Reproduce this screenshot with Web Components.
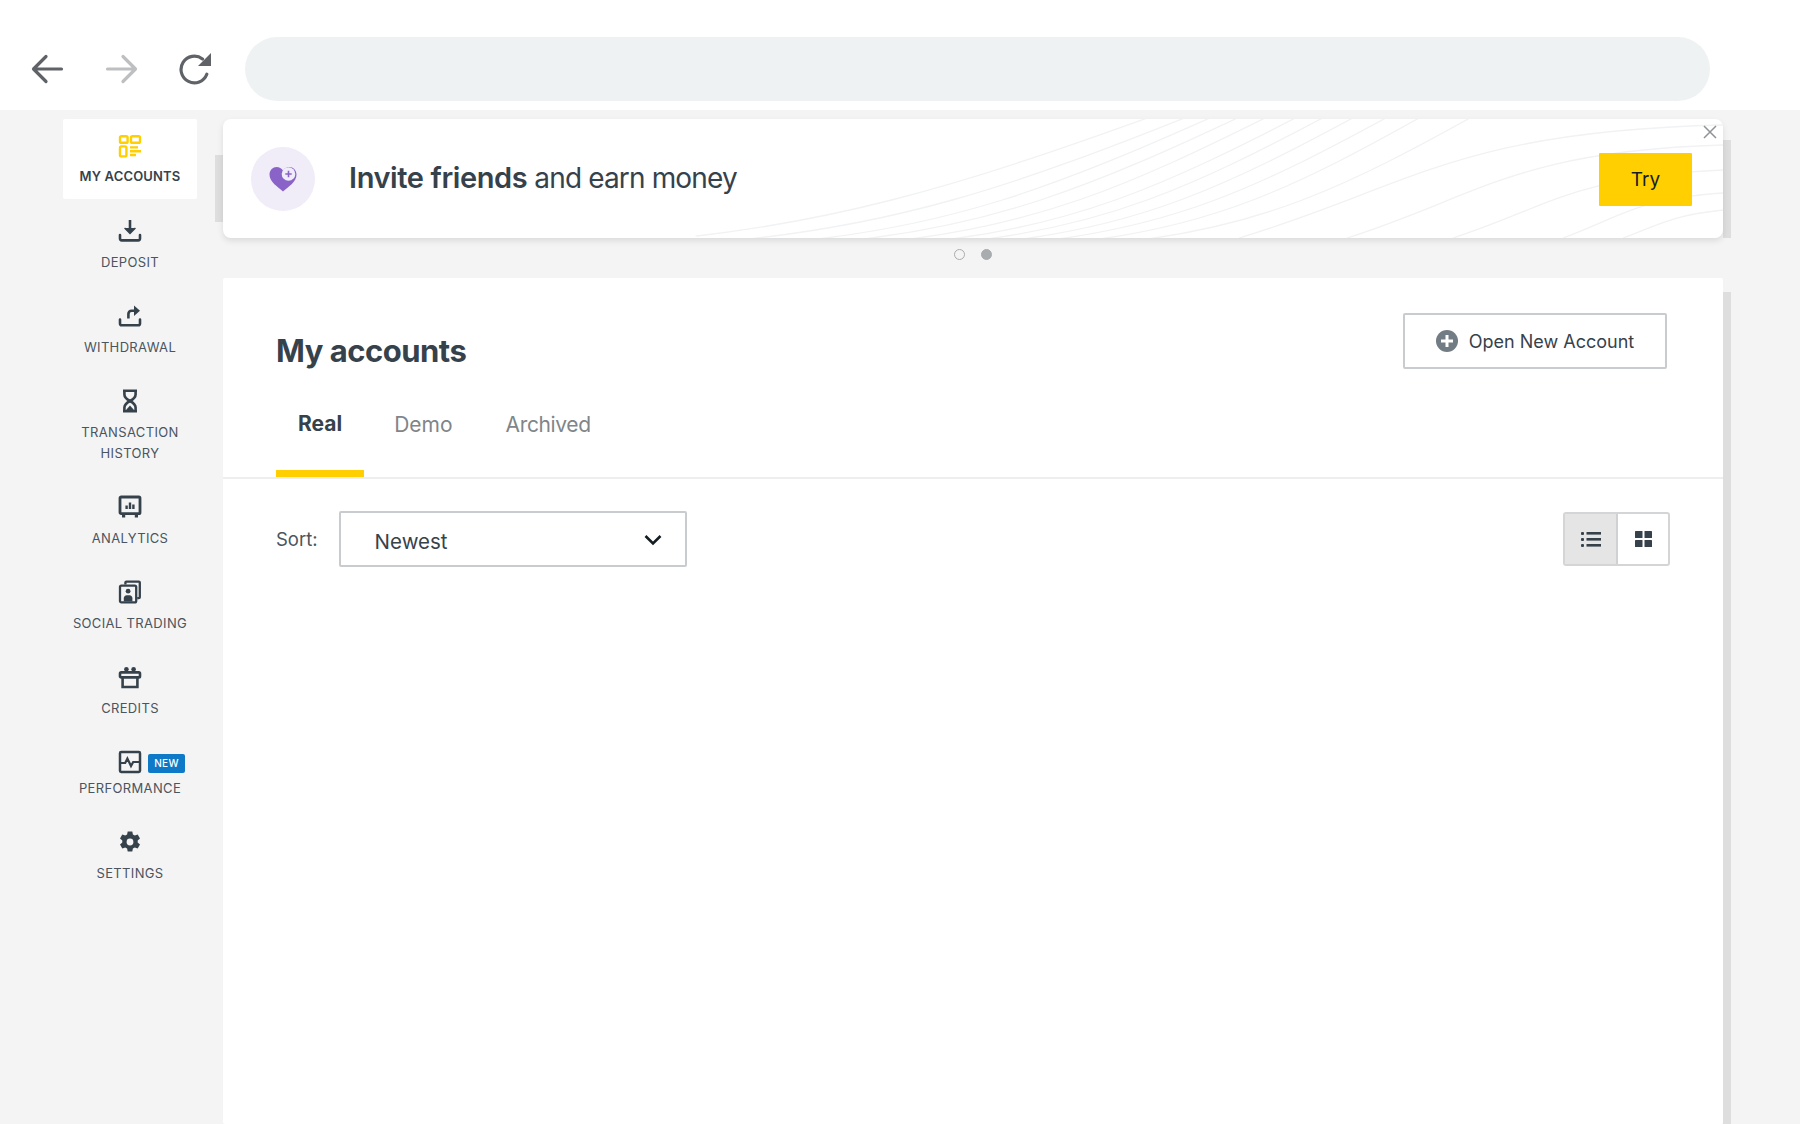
<!DOCTYPE html>
<html>
<head>
<meta charset="utf-8">
<title>My accounts</title>
<style>
  html { background: #f4f4f5; }
  html, body { margin: 0; height: 1124px; overflow: hidden; }
  body { font-family: Inter, "Liberation Sans", sans-serif; color: #36424b; }
  app-shell svg { display: block; }
</style>
</head>
<body>
<app-shell>
  <browser-bar slot="top"></browser-bar>
  <side-nav slot="nav">
    <nav-item label="MY ACCOUNTS" active>
      <svg width="24" height="24" viewBox="0 0 24 24" fill="none" stroke="#ffcf01" stroke-width="2.4"><rect x="2" y="2.2" width="7.6" height="6.6" rx="1.4"/><rect x="13" y="2.2" width="9" height="6.6" rx="1.4"/><rect x="2" y="12.4" width="6.4" height="10" rx="1.4"/><path d="M12 13.400h8M12 17.200h11M12 21h6"/></svg>
    </nav-item>
    <nav-item label="DEPOSIT">
      <svg width="24" height="24" viewBox="0 0 24 24" fill="none" stroke="#36424b" stroke-width="2.6"><path d="M12 1v12"/><path d="M6.600 9l5.400 5.600L17.400 9" fill="#36424b" stroke-width="1.400"/><path d="M2 16v3.600c0 1 .8 1.800 1.800 1.800h16.400c1 0 1.800-.8 1.800-1.800V16" stroke-linecap="round"/></svg>
    </nav-item>
    <nav-item label="WITHDRAWAL">
      <svg width="24" height="24" viewBox="0 0 24 24" fill="none" stroke="#36424b" stroke-width="2.6"><path d="M10.400 14.600V10c0-2 1.200-3.200 3.200-3.200H19"/><path d="M16 1.400l6 5.400-6 5.200z" fill="#36424b" stroke="none"/><path d="M2 15.600v3.800c0 1 .8 1.800 1.800 1.800h16.400c1 0 1.800-.8 1.800-1.800v-3.800" stroke-linecap="round"/></svg>
    </nav-item>
    <nav-item label="TRANSACTION HISTORY">
      <svg width="24" height="24" viewBox="0 0 24 24" fill="none" stroke="#36424b" stroke-width="2.6"><path d="M5 1.800h14M5 22.200h14"/><path d="M6.400 2v3.400c0 2.600 2 4.600 5.600 6.600 3.600-2 5.600-4 5.600-6.600V2"/><path d="M6.400 22v-3.400c0-2.600 2-4.600 5.600-6.600 3.600 2 5.600 4 5.600 6.600V22"/><path d="M8 21l4-4.400 4 4.400z" fill="#36424b" stroke="none"/></svg>
    </nav-item>
    <nav-item label="ANALYTICS">
      <svg width="24" height="24" viewBox="0 0 24 24" fill="none" stroke="#36424b" stroke-width="2.800"><rect x="2" y="2" width="20" height="16.600" rx="1.200"/><path d="M5.600 19v3.600M18.400 19v3.600" stroke-width="3.200"/><path d="M7.400 10.400h2.400v3.600H7.400zM10.800 7.600h2.400V14h-2.400zM14.200 9.400h2.400V14h-2.400z" fill="#36424b" stroke="none"/></svg>
    </nav-item>
    <nav-item label="SOCIAL TRADING">
      <svg width="24" height="24" viewBox="0 0 24 24" fill="none" stroke="#36424b" stroke-width="2.300"><path d="M7.400 4.600V2.600c0-.6.400-1 1-1h12.400c.6 0 1 .4 1 1v14.600c0 .6-.4 1-1 1h-1.600"/><rect x="2" y="5.600" width="16.200" height="16.800" rx="1.400"/><circle cx="10.100" cy="11.200" r="2.400" fill="#36424b" stroke="none"/><path d="M5.800 21.400v-3.200c0-1.600 1.200-3 2.800-3h3c1.600 0 2.800 1.400 2.800 3v3.200z" fill="#36424b" stroke="none"/></svg>
    </nav-item>
    <nav-item label="CREDITS">
      <svg width="24" height="24" viewBox="0 0 24 24" fill="none" stroke="#36424b" stroke-width="2.600"><rect x="2" y="7.400" width="20" height="5" rx="1.200"/><path d="M4.600 12.600V22h14.800v-9.400"/><circle cx="8.400" cy="4.200" r="2.300" fill="#36424b" stroke="none"/><circle cx="15.600" cy="4.200" r="2.300" fill="#36424b" stroke="none"/></svg>
    </nav-item>
    <nav-item label="PERFORMANCE" badge="NEW" compact>
      <svg width="24" height="24" viewBox="0 0 24 24" fill="none" stroke="#36424b" stroke-width="2.500"><rect x="2" y="2" width="20" height="20" rx="1.200"/><path d="M2.600 13h4.600l2.200-4.400 3.600 7.400 2.200-4h6" stroke-width="2.200"/></svg>
    </nav-item>
    <nav-item label="SETTINGS">
      <svg width="24" height="24" viewBox="0 0 24 24"><path fill="#36424b" fill-rule="evenodd" d="M14.300 1.400l.6 3 1.900 1 2.900-1 2.300 4-2.300 2v2.200l2.300 2-2.300 4-2.900-1-1.900 1-.6 3H9.700l-.6-3-1.900-1-2.900 1-2.300-4 2.300-2v-2.200l-2.300-2 2.300-4 2.900 1 1.900-1 .6-3zM12 8.600a3.400 3.400 0 1 0 0 6.800 3.400 3.400 0 0 0 0-6.800z"/></svg>
    </nav-item>
  </side-nav>
  <promo-banner slot="main"><b>Invite friends</b> and earn money</promo-banner>
  <carousel-dots slot="main"></carousel-dots>
  <accounts-panel slot="main"></accounts-panel>
</app-shell>

<script>
  class AppShell extends HTMLElement {
    constructor() {
      super();
      this.attachShadow({ mode: "open" });
      this.shadowRoot.innerHTML = `
        <style>
          :host { display: block; height: 1124px; overflow: hidden; }
          .body { display: flex; align-items: stretch; }
          .nav { width: 223px; flex: none; padding: 9px 0 0 63px; box-sizing: border-box; }
          .main { width: 1500px; flex: none; padding-top: 9px; }
        </style>
        <slot name="top"></slot>
        <div class="body">
          <div class="nav"><slot name="nav"></slot></div>
          <div class="main"><slot name="main"></slot></div>
        </div>`;
    }
  }
  customElements.define("app-shell", AppShell);

  class BrowserBar extends HTMLElement {
    constructor() {
      super();
      this.attachShadow({ mode: "open" });
      this.shadowRoot.innerHTML = `
        <style>
          :host { display: flex; align-items: center; height: 110px; background: #fff; box-sizing: border-box; padding: 27px 0 0 31px; }
          svg { display: block; flex: none; }
          .fwd { margin-left: 41px; }
          .reload { margin-left: 41px; }
          .url { width: 1465px; height: 64px; margin-left: 33px; border-radius: 32px; background: #eff2f3; }
        </style>
        <svg width="33" height="30" viewBox="0 0 33 30" fill="none" stroke="#5f6368" stroke-width="3.200" stroke-linecap="round" stroke-linejoin="round"><path d="M30.500 15H3M15 2.500L2.500 15 15 27.500"/></svg>
        <svg class="fwd" width="33" height="30" viewBox="0 0 33 30" fill="none" stroke="#bdbfc1" stroke-width="3.200" stroke-linecap="round" stroke-linejoin="round"><path d="M2.500 15H30M18 2.500L30.500 15 18 27.500"/></svg>
        <svg class="reload" width="33" height="32" viewBox="0 0 33 32" fill="none"><path d="M27.800 21.200A13.300 13.300 0 1 1 23.500 6" stroke="#5f6368" stroke-width="3.200" stroke-linecap="round"/><path d="M32 0v13H19z" fill="#5f6368"/></svg>
        <div class="url"></div>`;
    }
  }
  customElements.define("browser-bar", BrowserBar);

  class SideNav extends HTMLElement {
    constructor() {
      super();
      this.attachShadow({ mode: "open" });
      this.shadowRoot.innerHTML = `
        <style>
          :host { display: flex; flex-direction: column; gap: 5px; width: 134px; }
        </style>
        <slot></slot>`;
    }
  }
  customElements.define("side-nav", SideNav);

  class NavItem extends HTMLElement {
    constructor() {
      super();
      this.attachShadow({ mode: "open" });
      const badge = this.getAttribute("badge");
      this.shadowRoot.innerHTML = `
        <style>
          :host { display: flex; flex-direction: column; align-items: center; box-sizing: border-box; padding: 15px 0 11px; font-size: 13px; line-height: 21px; text-align: center; letter-spacing: .35px; color: #4a555e; }
          :host([active]) { padding-bottom: 12px; background: #fff; border-radius: 2px; color: #36424b; font-weight: 600; letter-spacing: .15px; }
          :host([compact]) { padding-bottom: 11px; }
          .icon { position: relative; width: 24px; height: 24px; margin-bottom: 9px; }
          :host([active]) .icon { margin-bottom: 8px; }
          :host([compact]) .icon { margin-bottom: 4px; }
          .badge { position: absolute; left: 30px; top: 4px; width: 37px; height: 19px; border-radius: 2px; background: #0d79c7; color: #fff; font-size: 10px; line-height: 19px; font-weight: 500; letter-spacing: .3px; }
          .label { width: 124px; }
        </style>
        <div class="icon"><slot></slot>${badge ? `<span class="badge">${badge}</span>` : ""}</div>
        <div class="label">${this.getAttribute("label")}</div>`;
    }
  }
  customElements.define("nav-item", NavItem);

  // wave lines of the banner: start x at the bottom edge, end x at the top edge
  const WAVES_UP = [[-10, 456], [72, 492], [144, 516], [192, 543], [240, 570], [282, 600], [318, 627], [354, 657], [390, 690], [432, 723], [480, 774]];
  // lines that flatten out towards the right edge: start x, end y
  const WAVES_FLAT = [[546, 6], [654, 26], [760, 51], [870, 74], [930, 91]];

  class PromoBanner extends HTMLElement {
    constructor() {
      super();
      this.attachShadow({ mode: "open" });
      let lines = "";
      for (const [sx, ex] of WAVES_UP) {
        const dx = ex - sx;
        lines += `<path d="M${sx - 60} 124 C ${sx + dx * 0.3} 110, ${sx + dx * 0.6} 66, ${ex + 12} -6"/>`;
      }
      for (const [sx, ey] of WAVES_FLAT) {
        const dx = 1030 - sx;
        lines += `<path d="M${sx} 119 C ${sx + dx * 0.35} ${119 - (119 - ey) * 0.45}, ${sx + dx * 0.45} ${ey + 6}, 1030 ${ey}"/>`;
      }
      this.shadowRoot.innerHTML = `
        <style>
          :host { display: flex; align-items: center; position: relative; height: 119px; box-sizing: border-box; padding: 0 31px 0 28px; background: #fff; border-radius: 8px; box-shadow: 0 3px 6px rgba(0,0,0,.1); font-size: 28px; letter-spacing: -.85px; color: #36424b; }
          :host::before, :host::after { content: ""; position: absolute; z-index: -1; background: #dedede; }
          :host::before { left: -8px; top: 36px; width: 8px; height: 67px; }
          :host::after { right: -8px; top: 21px; width: 8px; height: 98px; }
          .waves { position: absolute; right: 0; top: 0; border-radius: 8px; overflow: hidden; }
          .circle { position: relative; flex: none; display: flex; align-items: center; justify-content: center; width: 64px; height: 64px; border-radius: 50%; background: #f0ecf8; }
          .text { position: relative; flex: 1; margin: -2px 0 0 34px; }
          ::slotted(b) { font-size: 29px; font-weight: 600; letter-spacing: -.4px; }
          .try { position: relative; width: 93px; height: 53px; margin-top: 1px; background: #ffcf01; border-radius: 1px; color: #141d22; font-size: 19px; line-height: 53px; text-align: center; letter-spacing: 0; }
          .close { position: absolute; right: 6px; top: 6px; }
        </style>
        <svg class="waves" width="1030" height="119" viewBox="0 0 1030 119" fill="none" stroke="#f1f2f4" stroke-width="1.300">${lines}</svg>
        <div class="circle">
          <svg width="30" height="30" viewBox="0 0 30 30"><path fill="#8a63c9" d="M15 27.500C10 23 1.500 18 1.500 10.500 1.500 6 5 3 8.500 3c2.800 0 5 1.300 6.500 3.500C16.500 4.300 18.700 3 21.500 3c3.500 0 7 3 7 7.500 0 7.500-8.500 12.500-13.500 17z"/><circle cx="20.500" cy="10" r="6.800" fill="#f0ecf8"/><path d="M20.500 6.800v6.400M17.300 10h6.400" stroke="#8a63c9" stroke-width="1.600"/></svg>
        </div>
        <div class="text"><slot></slot></div>
        <div class="try">Try</div>
        <svg class="close" width="14" height="14" viewBox="0 0 14 14" stroke="#8f9397" stroke-width="1.500" fill="none"><path d="M1 1l12 12M13 1L1 13"/></svg>`;
    }
  }
  customElements.define("promo-banner", PromoBanner);

  class CarouselDots extends HTMLElement {
    constructor() {
      super();
      this.attachShadow({ mode: "open" });
      this.shadowRoot.innerHTML = `
        <style>
          :host { display: flex; justify-content: center; gap: 16px; height: 40px; align-items: center; box-sizing: border-box; padding-bottom: 8px; }
          i { display: block; box-sizing: border-box; width: 11px; height: 11px; border-radius: 50%; border: 1.500px solid #a9acaf; }
          i.on { background: #a9acaf; }
        </style>
        <i></i><i class="on"></i>`;
    }
  }
  customElements.define("carousel-dots", CarouselDots);

  class AccountsPanel extends HTMLElement {
    constructor() {
      super();
      this.attachShadow({ mode: "open" });
      this.shadowRoot.innerHTML = `
        <style>
          :host { display: block; position: relative; height: 846px; background: #fff; border-radius: 2px; color: #36424b; }
          :host::after { content: ""; position: absolute; z-index: -1; right: -8px; top: 14px; bottom: 0; width: 8px; background: #dedede; }
          .head { display: flex; justify-content: space-between; padding: 35px 56px 0 53px; }
          h1 { margin: 16px 0 0; font-size: 31px; line-height: 44px; font-weight: 700; letter-spacing: -.5px; }
          .open { display: flex; align-items: center; justify-content: center; gap: 11px; width: 264px; height: 56px; box-sizing: border-box; border: 2px solid #c9ccce; border-radius: 2px; font-size: 18px; }
          .tabs { display: flex; height: 78px; margin-top: 26px; padding-left: 53px; border-bottom: 2px solid #eeeeee; font-size: 21px; color: #7f8589; }
          .tab { line-height: 46px; margin-top: 3px; padding: 0 27px 0 31px; }
          .tab:nth-child(2) { margin-left: -1px; padding-right: 22px; }
          .tab:nth-child(3) { letter-spacing: -.35px; }
          .tab.on { height: 78px; box-sizing: border-box; padding: 2px 22px 0; border-bottom: 7px solid #ffcf01; color: #36424b; font-weight: 700; margin-top: 0; }
          .tools { display: flex; align-items: center; padding: 32px 53px 0 53px; }
          .sort { font-size: 18.500px; color: #4a555e; }
          .select { display: flex; align-items: center; justify-content: space-between; width: 348px; height: 56px; margin-left: 21px; box-sizing: border-box; padding: 4px 23px 0 34px; border: 2px solid #c9ccce; border-radius: 2px; font-size: 20.500px; }
          .select svg { margin-top: -3px; }
          .view { display: flex; margin-left: auto; height: 54px; box-sizing: border-box; border: 2px solid #d3d5d7; border-radius: 3px; }
          .view div { display: flex; align-items: center; justify-content: center; width: 50px; }
          .view .on { width: 51px; background: #e5e5e5; border-right: 2px solid #cfd1d3; }
        </style>
        <div class="head">
          <h1>My accounts</h1>
          <div class="open">
            <svg width="22" height="22" viewBox="0 0 22 22"><circle cx="11" cy="11" r="11" fill="#717c84"/><path d="M11 5v12M5 11h12" stroke="#fff" stroke-width="3"/></svg>
            <span>Open New Account</span>
          </div>
        </div>
        <div class="tabs">
          <div class="tab on">Real</div>
          <div class="tab">Demo</div>
          <div class="tab">Archived</div>
        </div>
        <div class="tools">
          <span class="sort">Sort:</span>
          <div class="select">
            <span>Newest</span>
            <svg width="18" height="12" viewBox="0 0 18 12" fill="none" stroke="#141d22" stroke-width="2.600"><path d="M1.500 2l7.500 7.500L16.500 2"/></svg>
          </div>
          <div class="view">
            <div class="on"><svg width="20" height="16" viewBox="0 0 20 16" fill="#36424b"><rect x="0" y="1" width="3" height="3" rx="1"/><rect x="0" y="7" width="3" height="3" rx="1"/><rect x="0" y="13" width="3" height="3" rx="1"/><rect x="5.500" y="1" width="14.500" height="2.600"/><rect x="5.500" y="7" width="14.500" height="2.600"/><rect x="5.500" y="13" width="14.500" height="2.600"/></svg></div>
            <div><svg width="17" height="16" viewBox="0 0 17 16" fill="#36424b"><rect width="7.500" height="7" rx=".6"/><rect x="9.500" width="7.500" height="7" rx=".6"/><rect y="9" width="7.500" height="7" rx=".6"/><rect x="9.500" y="9" width="7.500" height="7" rx=".6"/></svg></div>
          </div>
        </div>`;
    }
  }
  customElements.define("accounts-panel", AccountsPanel);
</script>
</body>
</html>
